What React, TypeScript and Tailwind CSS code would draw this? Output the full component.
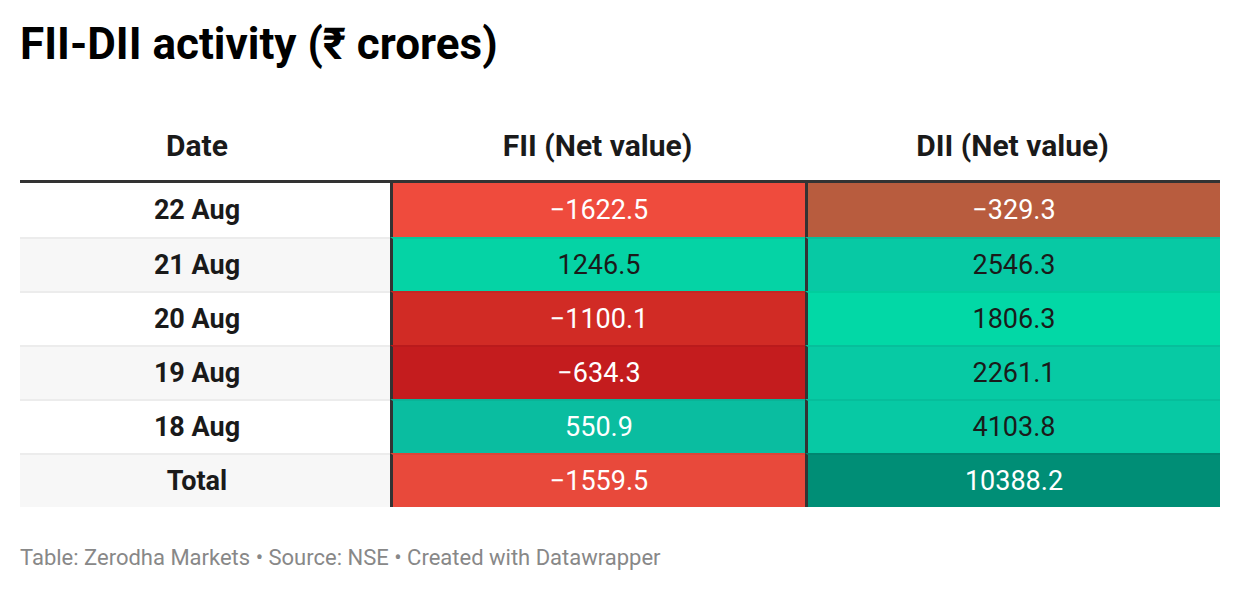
const rows = [
  { date: "22 Aug", fii: "−1622.5", fiiBg: "bg-[#ef4b3d]", fiiText: "text-white", dii: "−329.3", diiBg: "bg-[#b85c3e]", diiText: "text-white" },
  { date: "21 Aug", fii: "1246.5", fiiBg: "bg-[#05d3a5]", fiiText: "text-[#1a1a1a]", dii: "2546.3", diiBg: "bg-[#07c9a4]", diiText: "text-[#1a1a1a]" },
  { date: "20 Aug", fii: "−1100.1", fiiBg: "bg-[#d12b25]", fiiText: "text-white", dii: "1806.3", diiBg: "bg-[#02d8a6]", diiText: "text-[#1a1a1a]" },
  { date: "19 Aug", fii: "−634.3", fiiBg: "bg-[#c41c1e]", fiiText: "text-white", dii: "2261.1", diiBg: "bg-[#07caa4]", diiText: "text-[#1a1a1a]" },
  { date: "18 Aug", fii: "550.9", fiiBg: "bg-[#0abda0]", fiiText: "text-white", dii: "4103.8", diiBg: "bg-[#07c9a4]", diiText: "text-[#1a1a1a]" },
  { date: "Total", fii: "−1559.5", fiiBg: "bg-[#e8493b]", fiiText: "text-white", dii: "10388.2", diiBg: "bg-[#008e76]", diiText: "text-white" },
];

export default function App() {
  return (
    <div className="w-[1240px] h-[592px] bg-white px-5 pt-[18px] font-['Roboto',sans-serif] text-[#1a1a1a]">
      {/* Title */}
      <h1 className="text-[44px] font-bold leading-[1.2] text-black">FII-DII activity (₹ crores)</h1>

      {/* Table */}
      <div className="mt-[57px]">
        <div className="grid grid-cols-[370px_415px_415px] border-b-[3px] border-[#333333] pb-[16px] text-[30px] font-bold leading-[36px]">
          <div className="pr-4 text-center">Date</div>
          <div className="text-center">FII (Net value)</div>
          <div className="text-center">DII (Net value)</div>
        </div>

        {rows.map((row, i) => (
          <div key={row.date} className="grid grid-cols-[370px_415px_415px] h-[54px] text-[27px] leading-[32px]">
            <div
              className={`flex items-center justify-center pr-4 font-bold ${i > 0 ? "border-t-2 border-t-[#ececec]" : ""} ${i % 2 === 1 ? "bg-[#f7f7f7]" : "bg-white"}`}
            >
              {row.date}
            </div>
            <div
              className={`flex items-center justify-center border-l-[3px] border-l-[#333333] ${i > 0 ? "border-t-2 border-t-black/5" : ""} ${row.fiiBg} ${row.fiiText}`}
            >
              {row.fii}
            </div>
            <div
              className={`flex items-center justify-center border-l-[3px] border-l-[#333333] ${i > 0 ? "border-t-2 border-t-black/5" : ""} ${row.diiBg} ${row.diiText}`}
            >
              {row.dii}
            </div>
          </div>
        ))}
      </div>

      {/* Footer */}
      <p className="mt-[38px] text-[22px] leading-[26px] text-[#888888]">
        Table: Zerodha Markets • Source: NSE • Created with Datawrapper
      </p>
    </div>
  );
}
